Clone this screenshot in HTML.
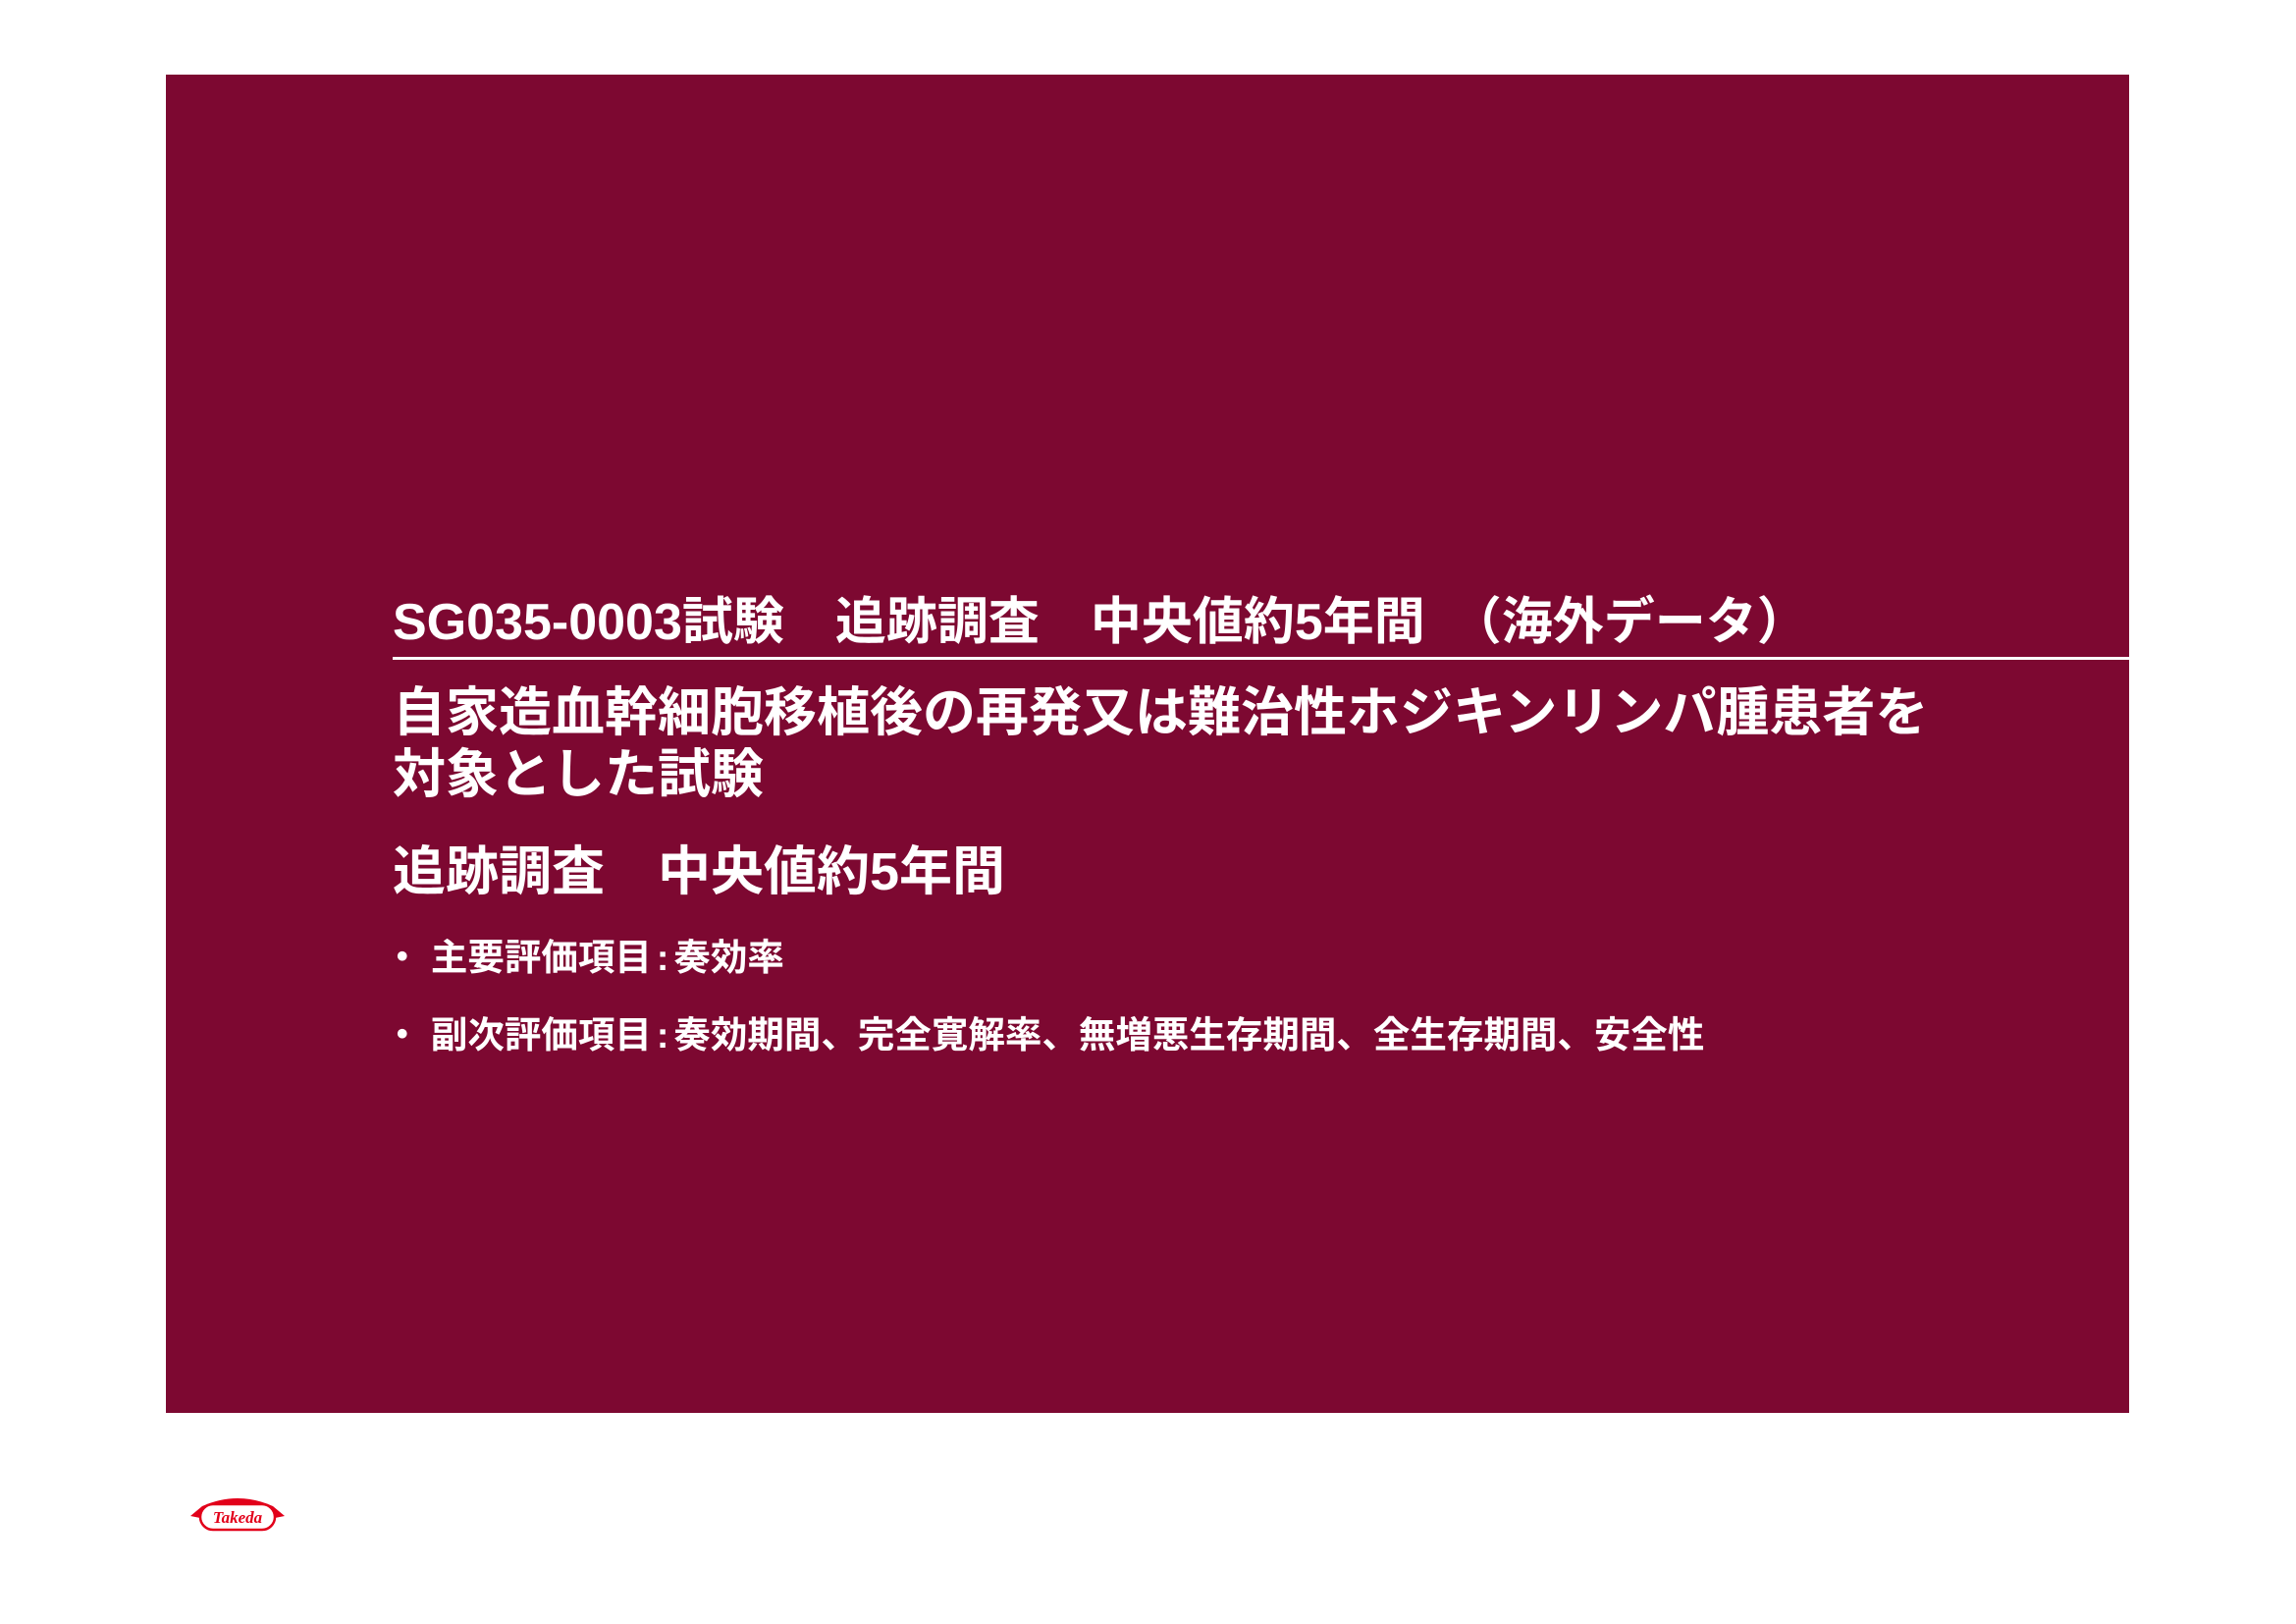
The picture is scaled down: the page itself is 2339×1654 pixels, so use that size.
<!DOCTYPE html>
<html><head><meta charset="utf-8"><style>
html,body{margin:0;padding:0;background:#fff;}
body{width:2339px;height:1654px;position:relative;overflow:hidden;font-family:"Liberation Sans","Noto Sans CJK JP",sans-serif;font-weight:bold;color:#fff;}
#box{position:absolute;left:169px;top:76px;width:2000px;height:1363px;background:#7d0831;}
.t{position:absolute;left:400px;white-space:nowrap;line-height:1;}
#rule{position:absolute;left:400px;top:669px;width:1769px;height:3px;background:#fff;}
.c{margin:0 5px;}
</style></head><body>
<div id="box"></div>
<div class="t" style="top:608px;font-size:52px;">SG035-0003試験　追跡調査　中央値約5年間　（海外データ）</div>
<div id="rule"></div>
<div class="t" style="top:695px;font-size:54px;line-height:63px;">自家造血幹細胞移植後の再発又は難治性ホジキンリンパ腫患者を<br>対象とした試験</div>
<div class="t" style="top:861px;font-size:54px;">追跡調査　中央値約5年間</div>
<div class="t" style="top:957px;font-size:37.5px;left:391px;">・ 主要評価項目<span class="c">:</span>奏効率</div>
<div class="t" style="top:1036px;font-size:37.5px;left:391px;">・ 副次評価項目<span class="c">:</span>奏効期間、完全寛解率、無増悪生存期間、全生存期間、安全性</div>
<svg style="position:absolute;left:192px;top:1522px" width="100" height="38" viewBox="0 0 100 38">
<path d="M2 22 L14 12 Q50 -4 86 12 L98 22 L88 24 Q50 4 12 24 Z" fill="#e2001a"/>
<rect x="12" y="10" width="76" height="26" rx="13" fill="#fff" stroke="#e2001a" stroke-width="2.5"/>
<text x="50" y="29" text-anchor="middle" font-family="Liberation Serif,serif" font-style="italic" font-weight="bold" font-size="17" fill="#e2001a">Takeda</text>
</svg>
</body></html>
